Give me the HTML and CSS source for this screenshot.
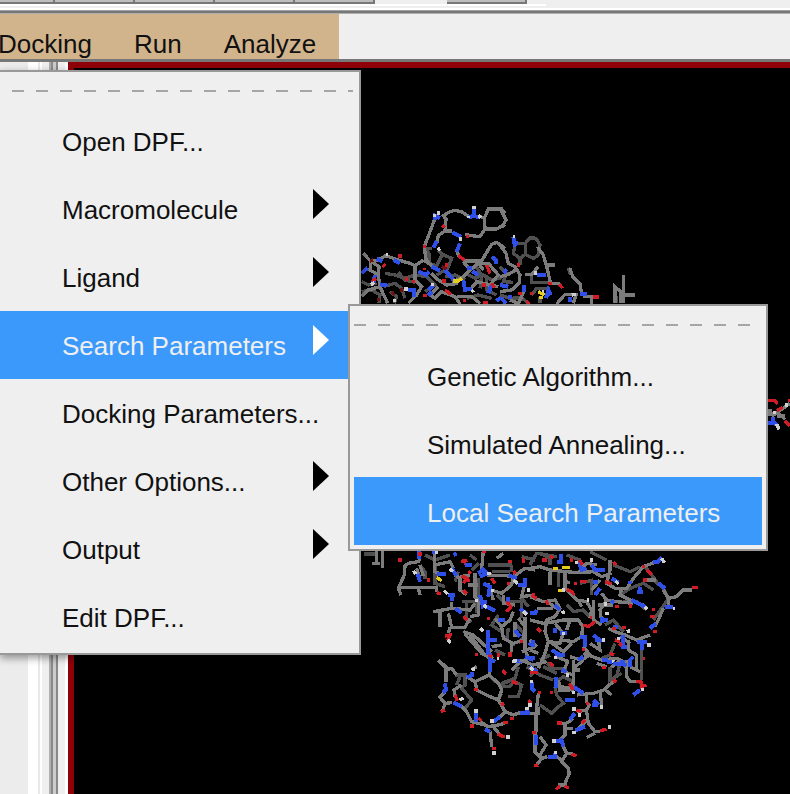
FILE: index.html
```html
<!DOCTYPE html>
<html lang="en">
<head>
    <meta charset="UTF-8">
    <meta name="viewport" content="width=device-width, initial-scale=1.0">
    <title>Docking</title>
    <link rel="stylesheet" href="styles.css">
</head>
<body>
    <div class="toolbar">
        <div class="tool-group">
            <span class="tool first"></span>
            <span class="tool"></span>
            <span class="tool"></span>
            <span class="tool"></span>
            <span class="tool"></span>
            <span class="tool single"></span>
        </div>
    </div>
    <nav class="menubar">
        <div class="menubar-items">
            <button type="button">Docking</button>
            <button type="button">Run</button>
            <button type="button">Analyze</button>
        </div>
    </nav>
    <main class="workspace">
        <aside class="sidebar"></aside>
        <section class="viewer">
            <svg class="molecule" viewBox="74 68 716 726" preserveAspectRatio="xMinYMin meet" role="img" aria-label="Macromolecule">
                <!-- upper left -->
                <g transform="translate(355 195) scale(.33333)">
                    <path class="dark" d="M208 155L222 175V205L245 212 262 178 250 165M208 160H232M262 178L290 190 278 220 245 240M90 235L120 240 150 250 180 240M130 232L150 255 180 262M85 275L120 265 140 280 150 310M20 290L50 285 75 300 72 325M180 240L215 245 240 270 210 290M330 235L360 250 385 240 410 255 440 248M335 310L370 300 410 310M360 210L380 240 375 280M20 260L40 270 65 265M270 245L300 240 330 255M105 290L125 305 118 325M395 240V285L425 300"/>
                    <path class="grey" d="M208 155L225 110 240 70M208 155L212 190 222 205M270 108L273 72 265 62 285 50 300 46 320 50 340 64M375 64L388 70 400 42H440L450 55M388 70L390 102 375 125 350 122 330 118M390 102H425L450 88M270 108H292M270 108L250 122 245 145M305 165L312 185M325 198H380L395 172 410 148 425 142 450 160M25 175L48 200 70 195 92 182 115 190 140 198 165 205 180 212 205 195M48 200L45 225 70 240 72 215 50 200M70 240L75 275 98 325M75 275L40 285 20 305M180 212V255L200 275 185 300 160 325M205 195L235 215M250 275L225 300 240 310 260 290 300 305 315 327M325 200L345 225 370 205 385 225M345 225L325 245 300 258M370 205L400 205 430 240 400 275M230 235L250 255 275 270 310 265M305 305H350L375 325M345 285L365 260 430 275"/>
                    <path class="blue" d="M240 75V62L255 70M292 112L318 126M357 40V62L340 68M357 62L372 68M245 138L235 158M315 145L305 170M410 185L422 195V208M20 235L38 218M65 190L82 200M115 195L135 205M230 215L255 228M300 260L270 225M55 262L60 240M75 268L98 272M160 285H178V305M190 230L215 240M235 270L220 285M325 255L330 285 350 280M352 228L370 240M335 220H350M400 295L410 270M425 318L440 305M218 302L230 290M210 245L222 230"/>
                    <path class="red" d="M204 154H213M262 90L268 98M310 182L328 195M82 215L92 208M395 210L405 235M275 205V215M270 285L288 298M410 265L418 278M150 252H160M130 183H140M50 260L62 250M262 258H272M382 270H392M385 323H398M333 124H342M205 302H215M172 260H180M325 317H333M208 218V226"/>
                    <path class="deep" d="M45 198L55 195M70 308V318M110 290L118 300M135 285H145M260 215L275 222"/>
                    <path class="white" d="M357 33V42M235 62H242M245 54H255M370 62L378 68M248 158L255 167M340 63V70M311 132H320M115 317H123M148 282H158M48 270L58 262M350 285L356 292M228 268H238M92 178H98"/>
                    <path class="yellow" d="M295 258H310L320 250"/>
                </g>
                <!-- upper right -->
                <g transform="translate(500 195) scale(.33333)">
                    <path class="dark" d="M45 150L40 175 60 190 76 178V145H50M76 145L90 128 108 130 120 150 115 180 100 190 76 178M60 190V210M0 215L20 235 10 260 40 262M0 300L30 310 65 308 85 325M95 235V262H145M120 305V325M95 300L110 280 150 280M345 280L350 325M205 218L212 240"/>
                    <path class="grey" d="M0 40L18 75 5 98M0 150L18 175 25 205 45 215 60 240 57 265 35 285 0 290M112 155L130 180 140 215 152 265H180M140 210H165M210 220L218 245 240 268 245 295M75 238H95L115 215M170 327L195 298H235M220 325L228 300M275 327V305H250M345 325V275L362 290V325M370 240V325M370 300H405M0 245L25 238 48 225M30 315L55 325 72 290"/>
                    <path class="blue" d="M40 125L45 155M42 143H55M12 235L20 222M112 240H137M72 270V290M138 310L145 285 152 300M240 298H262M210 305V322M5 310L18 325M0 270L25 275M25 305H35"/>
                    <path class="red" d="M50 210H60M145 265H155M178 268L188 280M280 306H298M55 295H65M90 295H100M80 318L88 327"/>
                    <path class="white" d="M38 125H46M102 234H112M215 300L228 298M125 290H133"/>
                    <path class="yellow" d="M115 290L133 300M118 307H128"/>
                </g>
                <!-- right edge residue -->
                <g transform="translate(670 380) scale(.33333)">
                    <path class="grey" d="M294 90L310 105 335 88 360 70M320 95L345 118M320 108H345M300 88V108"/>
                    <path class="blue" d="M308 110V130H294M308 125L320 135"/>
                    <path class="red" d="M294 62H315L322 72M320 92L338 82M345 122L360 138M355 62H360"/>
                    <path class="white" d="M320 132L327 148M310 97H317M345 75H355"/>
                </g>
                <!-- lower left -->
                <g transform="translate(355 540) scale(.33333)">
                    <path class="dark" d="M28 42H60M195 75L210 95V118M240 75V130L270 140M210 45L240 60 285 45M320 185H365V220M335 190V235L350 245M370 115V180M400 75H470M410 95H465M470 75V95M300 125L310 95M500 50L540 60M455 185H500V235M430 225L410 255 440 275M480 250L510 285 490 310M460 265L455 300 480 315M420 330L450 345M370 70L350 90M500 175L520 200M345 45L365 60M425 165L450 190"/>
                    <path class="grey" d="M50 70H75M65 33V70M82 33V85M145 80L160 70 190 65 195 55M150 78L148 105 130 145 138 165M135 142H245L245 155M190 145L195 165M195 115L185 85M205 108L195 75M238 40V95L265 105M240 75L285 65 295 85M300 105L315 115V150L335 165M315 110L345 105M290 185V205L235 215M255 215V260M290 205L345 210 360 190M280 220L290 262H330L345 235M285 262L280 280M325 275L355 285 410 335M330 282L380 340 415 355M345 285L390 345M360 100V170L380 190M340 135H370M370 185V225L345 230M385 33L380 85 400 105 465 108M400 130L415 180M410 150L440 160 470 135 475 110M445 165V190L480 195M475 110L510 85 540 90M510 130L500 170 535 165M475 215L465 240 440 260 445 295 475 310 505 300 510 260 490 235M510 230V330L520 355M440 260L420 235M470 310V335M500 335L540 320M480 245V290M250 362L285 390M350 390L365 380M390 345L420 365M520 355L490 370 470 390M440 315L410 320M425 55L445 40"/>
                    <path class="blue" d="M192 33V58M188 102L195 125M245 103H272M290 85L305 108M290 158V182M280 165H300M300 205L320 218M370 100L385 88 400 105M375 110L395 100M385 130L405 140 400 170M375 165L385 205M378 185H395M395 200L420 212M400 270V300H425M400 300V345M405 340V390M430 240H450M460 105L485 115M490 135H510V115M495 205L515 222M480 270L495 290M510 350L535 360M460 170V185M230 35H240M295 45L305 40M330 75H350M405 362H420M475 362L500 365M520 310L540 315"/>
                    <path class="red" d="M130 60H140M190 42H202M215 120H225M245 157L258 163M318 65L335 60 325 70M320 108L335 115 325 130M335 122H345M325 152L335 162M340 95L348 100M325 230L337 240M270 288L285 285 278 302M455 130H465M455 185L468 200 455 215M460 65H470M505 55V70M380 35H392M410 115L420 130M400 230V240M425 345H435M465 335V352M400 345L412 350M495 305H503M365 338V348M475 92L482 102M530 165H540"/>
                    <path class="white" d="M175 92L183 102M268 152L278 163M285 85L292 95M395 100H408M375 265L385 275M412 148V156M475 120L488 130M505 215L515 225M278 300L287 307M240 38H250M360 182H370M475 362H485M385 195L395 202M520 145V155M425 355H433"/>
                    <path class="yellow" d="M245 112L260 122"/>
                </g>
                <!-- lower right -->
                <g transform="translate(530 540) scale(.33333)">
                    <path class="dark" d="M30 38L60 55V75M0 75L20 40 80 50M180 35L230 60M85 95V140M185 120V165M250 75L300 95 330 80M270 165L300 145 340 130 370 150M280 185H320L350 210M370 120L400 145 415 175 395 205 370 240M335 320V390M150 130L190 120M345 80L380 125M110 45L150 60M110 195L130 215 160 210 180 230M60 345L30 360M255 310L240 345 215 355M225 255L250 240 280 275"/>
                    <path class="grey" d="M0 85L30 80 60 90 140 98 190 95 215 110 245 100M60 95V135M105 95V145L140 180 170 185 185 210 180 235M100 120L120 130M240 60V90L230 130 255 145H290L310 115 340 80 380 65M350 120H378M400 150L415 175 440 170 460 150H485M415 175V198M400 205L385 240 375 260M275 145L270 165 300 180 340 195M0 170L40 185 75 180 90 205 75 230 50 240 45 275 55 305 45 340 25 385M0 240L40 250 75 245 100 240 145 240 158 260 155 290 130 305 90 300M75 250L100 280 90 310 60 305M60 305L100 335 125 310M160 320L180 345 155 360 120 350M190 180V240L215 255M215 160L230 180 210 210 215 245M230 180L260 185 310 190M160 340L215 360 260 355 300 375M180 310L210 330 205 300M235 265L255 275 285 285 320 300 360 285M295 300V330L320 345V390M270 360L240 385M300 310L270 290M0 330L25 340M130 385L160 360M210 120L185 150M145 98L170 70 200 75M20 205H70M50 185L90 210M205 195H250M0 300L20 320M120 240L110 270M145 180L155 200M80 350L115 365"/>
                    <path class="blue" d="M92 42V70M80 65H100M145 62L155 90 170 85M185 75L195 90H225M370 65H385L395 52M245 115L265 128M300 122V132M320 155H340M330 140V160M385 130L405 145M405 202H430M305 180L345 200M360 265L378 250M195 165L210 145M75 195L90 210M0 220H15L20 210M215 230V250M218 240H235M190 285L215 305M195 300H210M150 290H165V320M65 330L90 345M75 345H105M75 265V280M90 280H110M280 285V320H290M320 305H350M335 310V330M295 365L310 350M10 300V320M230 365H245M270 365H285M145 360L160 350M245 190L250 180M190 125H205M0 355H15M250 260H265"/>
                    <path class="red" d="M35 60H50M60 48L70 55M120 60H130M148 60L158 75M132 130H142M110 148L125 155 133 165M225 125L245 132M335 80H345M350 90L365 105M340 120H352M485 143H505M365 208H375M360 230H375M370 275H380M5 165L20 175M48 182L55 195M22 265L32 275M160 255L175 260 195 245M255 200H268M275 263H287M245 265H257M255 300L270 305M60 365V378M215 382H228M240 340L252 345M155 328H165M250 65L258 75M150 125H170M268 310L275 318M298 198H305M180 232H187M340 355H345"/>
                    <path class="white" d="M135 68H145M95 150H105M97 212L103 222M225 220H237M350 315H362M395 55L403 68M95 280H105M215 300H225M72 352H82M245 365H255M345 200L352 208M290 275L300 272M222 192H230M170 180H178M430 205H436M262 295H270M180 60H190M257 123L265 132"/>
                    <path class="yellow" d="M70 85H83M95 83H120M84 152H95"/>
                </g>
                <!-- bottom -->
                <g transform="translate(430 660) scale(.33333)">
                    <path class="dark" d="M75 45H105V75L90 85M90 50L80 75M95 85L125 120 105 145M180 50L210 75 245 60 275 75 265 110 235 110M215 70L255 55 265 20M290 20L330 45 370 60M300 50L320 25M330 135L365 160 385 140 400 130 380 105 375 80M540 20V60L575 40M570 10L560 50M635 10V60M380 65L400 50 430 65M210 80H240L250 65M340 20L380 40M350 10L370 25 410 25M205 115L215 100"/>
                    <path class="grey" d="M25 0L48 25V65M48 25H65L80 45M45 95L30 112 45 130 65 128M45 130L38 152M75 110L72 90 95 75M90 135L110 155 125 185 165 195M140 85L135 65 178 45 205 70 215 90 205 120 175 108 140 90M178 35V50M135 65L110 50M205 120L225 155 205 175M225 155L250 165 270 158M300 160H318V215M318 160L325 100M150 185L175 200 205 195 225 190M180 215L185 260M190 200L210 225M315 215V275L335 295 352 290M330 230L348 255 330 285M335 295L320 315M325 140V165M430 0V65L425 95M415 0L400 35 430 45M430 30H450M385 90H420M385 60L390 80 430 85M440 105L490 100 520 90 550 65M510 95L515 135M520 85L545 105M470 105V130M480 130L470 150 440 155M470 155L475 190 495 215 510 215M470 180L445 205M495 220L470 232M405 190H385M405 185V225L390 240M405 205H430M430 175L410 190M400 260L410 280 395 305 415 325 418 340 405 370M410 280H430M380 290L395 300M590 0V50L600 65H620M600 20L630 35M600 10L580 20M270 0L310 15 350 5M500 10L530 20M385 375H410"/>
                    <path class="blue" d="M180 5V35M45 70L48 90 38 98M110 52L130 45M125 35V50M70 128L95 140M137 160V185M165 208L180 215M190 185L210 170M270 158H300M292 148V162M305 65V85L315 95M317 225V255M355 290H380M375 280V295M378 50V85M405 120H435M430 80L460 100M485 135H505M490 120L505 135M420 178L435 160M435 212L465 200M370 243H400M393 235L400 260M610 105L630 90M515 0H535M550 10L590 15M600 0V20M300 20L320 35M395 30L410 35"/>
                    <path class="red" d="M75 105L82 122M32 155L45 150M217 32L228 42M245 65L262 70M133 88H143M145 175L155 182M120 198H131M203 222L225 232M220 188H233M187 265H197M240 175H252M295 122L305 128M325 97H333M360 98H370M307 217H317M312 317L325 315M418 70L430 90M440 150L455 155M467 130H477M380 189H395M455 190L465 180M510 212L530 208M425 282L440 288M378 388L390 378M403 378L417 385M515 22H527M548 65L560 62M632 60L635 80 650 75M617 65H627M360 10L370 20M300 38H325M213 135L222 130"/>
                    <path class="white" d="M133 153H143M180 183H191M228 231H239M187 279H197M300 64H310M285 145H297M365 243H377M372 278H382M427 147H437M443 165H453M533 201H544M509 141H519M125 30L135 26M88 120L100 114M632 88H643M407 45H417M245 4H258M300 130V140M300 22L310 30M432 222V214M425 98H435"/>
                </g>
            </svg>
        </section>
    </main>

    <div class="menu main-menu" role="menu">
        <div class="tear-line"></div>
        <button type="button" role="menuitem">Open DPF...</button>
        <button type="button" role="menuitem">Macromolecule<span class="arrow"></span></button>
        <button type="button" role="menuitem">Ligand<span class="arrow"></span></button>
        <button type="button" role="menuitem" class="active">Search Parameters<span class="arrow"></span></button>
        <button type="button" role="menuitem">Docking Parameters...</button>
        <button type="button" role="menuitem">Other Options...<span class="arrow"></span></button>
        <button type="button" role="menuitem">Output<span class="arrow"></span></button>
        <button type="button" role="menuitem">Edit DPF...</button>
    </div>
    <div class="menu sub-menu" role="menu">
        <div class="tear-line"></div>
        <button type="button" role="menuitem">Genetic Algorithm...</button>
        <button type="button" role="menuitem">Simulated Annealing...</button>
        <button type="button" role="menuitem" class="active">Local Search Parameters</button>
    </div>
</body>
</html>
```
FILE: styles.css
```css
* {
    margin: 0;
    padding: 0;
    box-sizing: border-box;
}
body {
    position: relative;
    display: flex;
    flex-direction: column;
    height: 100vh;
    overflow: hidden;
    background-color: #efefef;
    color: #111;
    font-family: "Liberation Sans", Arial, sans-serif;
    font-size: 26px;
}
button {
    border: none;
    background: none;
    color: inherit;
    font: inherit;
    text-align: left;
    white-space: nowrap;
}

/* toolbar */
.toolbar {
    flex: none;
    height: 14px;
    background: linear-gradient(#efefef 8px, #fff 8px, #fff 10px, #a0a0a0 10px, #a0a0a0 11px, #777 11px, #777 13px, #b0b0b0 13px);
}
.tool-group {
    display: flex;
    width: 546px;
    height: 6px;
    border-bottom: 2px solid #fff;
}
.tool {
    width: 80px;
    height: 4px;
    background-color: #bdbdbd;
    border-right: 2px solid #777;
    border-bottom: 2px solid #777;
}
.tool.first {
    width: 55px;
}
.tool.single {
    margin-left: 72px;
}

/* menu bar */
.menubar {
    display: flex;
    flex: none;
    height: 48px;
    border-bottom: 3px solid #777;
}
.menubar-items {
    display: flex;
    margin-left: -23px;
    padding-right: 2px;
    background-color: #d2b48c;
}
.menubar button {
    padding: 14px 21px 0;
    line-height: 30px;
}

/* workspace */
.workspace {
    display: flex;
    flex: 1;
    min-height: 0;
}
.sidebar {
    flex: none;
    width: 68px;
    background: linear-gradient(to right,
        #ececec 28px, #fff 28px, #fff 38px,
        #e8e8e8 38px, #e8e8e8 40px, #fff 40px, #fff 42px,
        #efefef 42px, #efefef 49px, #b0b0b0 49px, #b0b0b0 51px,
        #8a8a8a 51px, #8a8a8a 53px, #ccc 53px, #ccc 56px,
        #888 56px, #888 58px, #efefef 58px, #efefef 65px, #fff 65px);
}
.viewer {
    flex: 1;
    min-width: 0;
    border-top: 6px solid #8f0008;
    border-left: 6px solid #8f0008;
    background-color: #000;
    overflow: hidden;
}
.molecule {
    display: block;
    width: 716px;
    height: 726px;
}
.molecule path {
    fill: none;
    stroke-width: 10;
    shape-rendering: crispEdges;
}
.molecule .grey {
    stroke: #7c7c7c;
}
.molecule .dark {
    stroke: #505050;
}
.molecule .blue {
    stroke: #2f50e8;
    stroke-width: 12;
}
.molecule .red {
    stroke: #d01c24;
}
.molecule .deep {
    stroke: #6e1014;
}
.molecule .white {
    stroke: #d0d0d0;
}
.molecule .yellow {
    stroke: #e6cc1c;
}

/* menus */
.menu {
    position: absolute;
    border: 2px solid #999;
    background-color: #efefef;
}
.main-menu {
    top: 70px;
    left: 0;
    width: 361px;
    padding-bottom: 2px;
    border-left: none;
    box-shadow: 0 3px 8px rgba(0, 0, 0, 0.4);
}
.sub-menu {
    top: 304px;
    left: 348px;
    width: 420px;
    padding: 0 4px 4px;
}
.tear-line {
    height: 35px;
    border-top: 18px solid #efefef;
    background: repeating-linear-gradient(to right, #efefef 0, #efefef 12px, #a6a6a6 12px, #a6a6a6 24px) 0 0 / 100% 2px no-repeat;
    background-origin: padding-box;
}
.main-menu .tear-line {
    margin-right: 6px;
}
.sub-menu .tear-line {
    background-image: repeating-linear-gradient(to right, #a6a6a6 0, #a6a6a6 12px, #efefef 12px, #efefef 24px);
}
.menu button {
    display: flex;
    align-items: center;
    justify-content: space-between;
    width: 100%;
    height: 68px;
    padding: 2px 30px 0 62px;
}
.sub-menu button {
    padding: 4px 30px 0 73px;
}
.menu button.active {
    background-color: #3b99fc;
    color: #efefef;
}
.arrow {
    margin-bottom: 12px;
    border-left: 16px solid #000;
    border-top: 15px solid transparent;
    border-bottom: 15px solid transparent;
}
.active .arrow {
    border-left-color: #fff;
}
```
